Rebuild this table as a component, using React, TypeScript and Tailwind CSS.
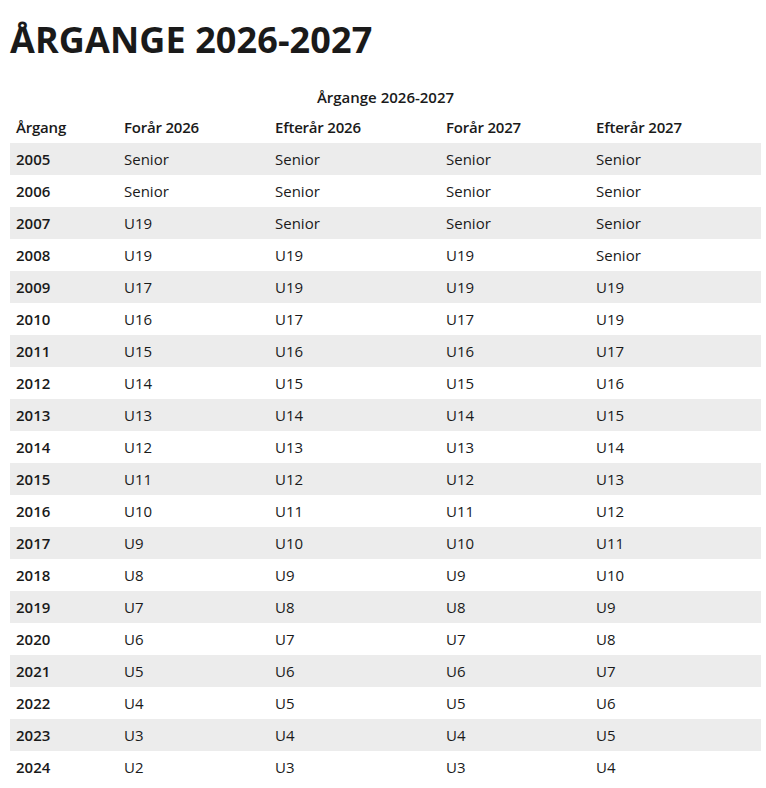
const rows: [string, string, string, string, string][] = [
  ['2005', 'Senior', 'Senior', 'Senior', 'Senior'],
  ['2006', 'Senior', 'Senior', 'Senior', 'Senior'],
  ['2007', 'U19', 'Senior', 'Senior', 'Senior'],
  ['2008', 'U19', 'U19', 'U19', 'Senior'],
  ['2009', 'U17', 'U19', 'U19', 'U19'],
  ['2010', 'U16', 'U17', 'U17', 'U19'],
  ['2011', 'U15', 'U16', 'U16', 'U17'],
  ['2012', 'U14', 'U15', 'U15', 'U16'],
  ['2013', 'U13', 'U14', 'U14', 'U15'],
  ['2014', 'U12', 'U13', 'U13', 'U14'],
  ['2015', 'U11', 'U12', 'U12', 'U13'],
  ['2016', 'U10', 'U11', 'U11', 'U12'],
  ['2017', 'U9', 'U10', 'U10', 'U11'],
  ['2018', 'U8', 'U9', 'U9', 'U10'],
  ['2019', 'U7', 'U8', 'U8', 'U9'],
  ['2020', 'U6', 'U7', 'U7', 'U8'],
  ['2021', 'U5', 'U6', 'U6', 'U7'],
  ['2022', 'U4', 'U5', 'U5', 'U6'],
  ['2023', 'U3', 'U4', 'U4', 'U5'],
  ['2024', 'U2', 'U3', 'U3', 'U4'],
];

const headers = ['Årgang', 'Forår 2026', 'Efterår 2026', 'Forår 2027', 'Efterår 2027'];
const widths = ['w-[108px]', 'w-[151px]', 'w-[171px]', 'w-[150px]', 'w-[171px]'];

export default function App() {
  return (
    <div className="min-h-screen bg-white px-[10px] pt-[18px] text-[#1a1a1a] font-['Open_Sans',sans-serif]">
      <h1 className="text-[36px] font-bold leading-[44px] tracking-[0.1px]">ÅRGANGE 2026-2027</h1>

      <table className="mt-[23px] w-[751px] table-fixed border-collapse text-[15px]">
        <caption className="h-[26px] pt-[2px] text-center font-semibold leading-[20px]">Årgange 2026-2027</caption>
        <thead>
          <tr className="h-[32px]">
            {headers.map((h, i) => (
              <th key={h} className={`${widths[i]} px-[6px] text-left font-semibold tracking-[-0.2px]`}>
                {h}
              </th>
            ))}
          </tr>
        </thead>
        <tbody>
          {rows.map((r, idx) => (
            <tr key={r[0]} className={idx % 2 === 0 ? 'h-[32px] bg-[#ececec]' : 'h-[32px]'}>
              {r.map((c, i) => (
                <td key={i} className={i === 0 ? 'px-[6px] font-semibold' : 'px-[6px]'}>
                  {c}
                </td>
              ))}
            </tr>
          ))}
        </tbody>
      </table>
    </div>
  );
}
